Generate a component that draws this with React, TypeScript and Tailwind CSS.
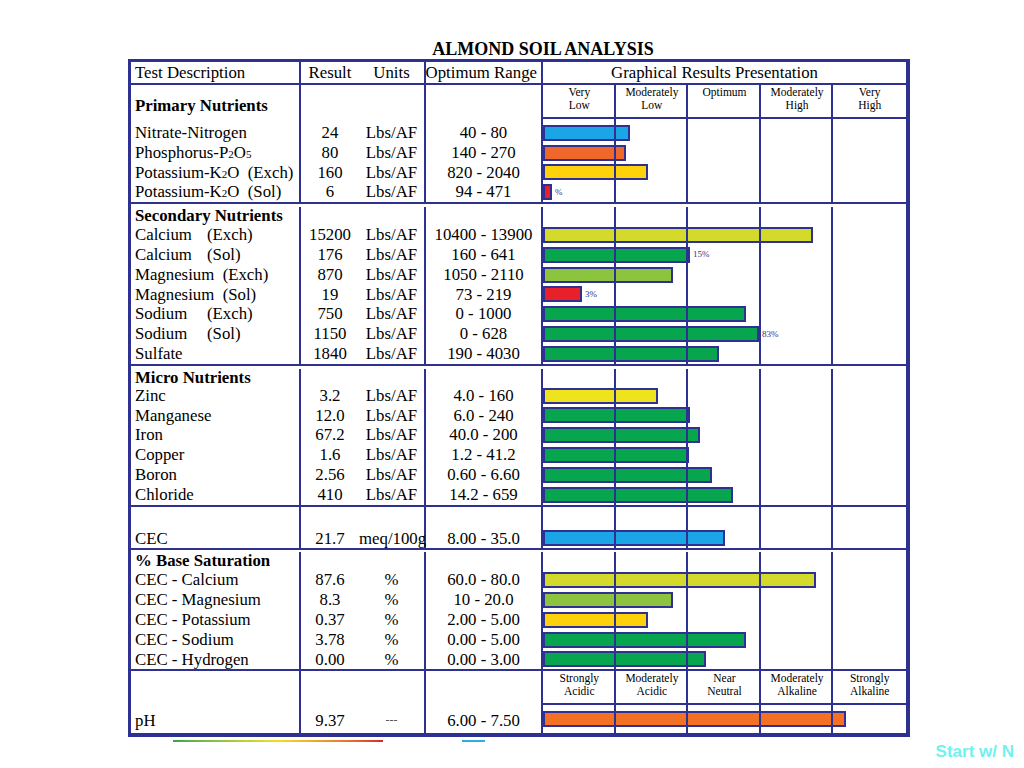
import type { ReactNode } from "react";

type Tone = "blue" | "orange" | "gold" | "red" | "lime" | "green" | "leaf" | "lemon" | "ph";

const toneClass: Record<Tone, string> = {
    blue: "bg-[#1ba4e6]",
    orange: "bg-[#f0672a]",
    gold: "bg-[#fdd20a]",
    red: "bg-[#e8202a]",
    lime: "bg-[#d3da2b]",
    green: "bg-[#08a54f]",
    leaf: "bg-[#8cc43f]",
    lemon: "bg-[#eee31c]",
    ph: "bg-[#f37024]",
};

type Test = {
    name: ReactNode;
    result: string;
    units: string;
    range: string;
    bar: number;
    tone: Tone;
    pct?: string;
};

const Sub = ({ children }: { children: ReactNode }) => (
    <span className="text-[11px]">{children}</span>
);

const Pad = ({ children }: { children: ReactNode }) => (
    <span className="inline-block w-[72px]">{children}</span>
);

const primary: Test[] = [
    { name: "Nitrate-Nitrogen", result: "24", units: "Lbs/AF", range: "40 - 80", bar: 87, tone: "blue" },
    { name: <>Phosphorus-P<Sub>2</Sub>O<Sub>5</Sub></>, result: "80", units: "Lbs/AF", range: "140 - 270", bar: 83, tone: "orange" },
    { name: <>Potassium-K<Sub>2</Sub>O  (Exch)</>, result: "160", units: "Lbs/AF", range: "820 - 2040", bar: 105, tone: "gold" },
    { name: <>Potassium-K<Sub>2</Sub>O  (Sol)</>, result: "6", units: "Lbs/AF", range: "94 - 471", bar: 9, tone: "red", pct: "%" },
];

const secondary: Test[] = [
    { name: <><Pad>Calcium</Pad>(Exch)</>, result: "15200", units: "Lbs/AF", range: "10400 - 13900", bar: 270, tone: "lime" },
    { name: <><Pad>Calcium</Pad>(Sol)</>, result: "176", units: "Lbs/AF", range: "160 - 641", bar: 147, tone: "green", pct: "15%" },
    { name: "Magnesium  (Exch)", result: "870", units: "Lbs/AF", range: "1050 - 2110", bar: 130, tone: "leaf" },
    { name: "Magnesium  (Sol)", result: "19", units: "Lbs/AF", range: "73 - 219", bar: 39, tone: "red", pct: "3%" },
    { name: <><Pad>Sodium</Pad>(Exch)</>, result: "750", units: "Lbs/AF", range: "0 - 1000", bar: 203, tone: "green" },
    { name: <><Pad>Sodium</Pad>(Sol)</>, result: "1150", units: "Lbs/AF", range: "0 - 628", bar: 216, tone: "green", pct: "83%" },
    { name: "Sulfate", result: "1840", units: "Lbs/AF", range: "190 - 4030", bar: 176, tone: "green" },
];

const micro: Test[] = [
    { name: "Zinc", result: "3.2", units: "Lbs/AF", range: "4.0 - 160", bar: 115, tone: "lemon" },
    { name: "Manganese", result: "12.0", units: "Lbs/AF", range: "6.0 - 240", bar: 147, tone: "green" },
    { name: "Iron", result: "67.2", units: "Lbs/AF", range: "40.0 - 200", bar: 157, tone: "green" },
    { name: "Copper", result: "1.6", units: "Lbs/AF", range: "1.2 - 41.2", bar: 146, tone: "green" },
    { name: "Boron", result: "2.56", units: "Lbs/AF", range: "0.60 - 6.60", bar: 169, tone: "green" },
    { name: "Chloride", result: "410", units: "Lbs/AF", range: "14.2 - 659", bar: 190, tone: "green" },
];

const cec: Test = { name: "CEC", result: "21.7", units: "meq/100g", range: "8.00 - 35.0", bar: 182, tone: "blue" };

const base: Test[] = [
    { name: "CEC - Calcium", result: "87.6", units: "%", range: "60.0 - 80.0", bar: 273, tone: "lime" },
    { name: "CEC - Magnesium", result: "8.3", units: "%", range: "10 - 20.0", bar: 130, tone: "leaf" },
    { name: "CEC - Potassium", result: "0.37", units: "%", range: "2.00 - 5.00", bar: 105, tone: "gold" },
    { name: "CEC - Sodium", result: "3.78", units: "%", range: "0.00 - 5.00", bar: 203, tone: "green" },
    { name: "CEC - Hydrogen", result: "0.00", units: "%", range: "0.00 - 3.00", bar: 163, tone: "green" },
];

const levels = [
    ["Very", "Low"],
    ["Moderately", "Low"],
    ["Optimum", ""],
    ["Moderately", "High"],
    ["Very", "High"],
];

const phLevels = [
    ["Strongly", "Acidic"],
    ["Moderately", "Acidic"],
    ["Near", "Neutral"],
    ["Moderately", "Alkaline"],
    ["Strongly", "Alkaline"],
];

function GraphLines() {
    return (
        <div className="pointer-events-none absolute inset-0 grid grid-cols-5">
            <div className="border-r-2 border-[#2e3192]" />
            <div className="border-r-2 border-[#2e3192]" />
            <div className="border-r-2 border-[#2e3192]" />
            <div className="border-r-2 border-[#2e3192]" />
            <div />
        </div>
    );
}

function Bar({ width, tone, pct }: { width: number; tone: Tone; pct?: string }) {
    return (
        <div className="flex items-center">
            <div
                className={`h-[16px] border-2 border-[#2e3192] ${toneClass[tone]}`}
                style={{ width }}
            />
            {pct && (
                <span className="ml-[3px] text-[9px] leading-none text-[#2e3192]">{pct}</span>
            )}
        </div>
    );
}

function Levels({ items }: { items: string[][] }) {
    return (
        <div className="grid h-[34px] grid-cols-5 border-b-2 border-[#2e3192] text-center text-[11.5px] leading-[13px]">
            {items.map(([a, b]) => (
                <div key={a + b} className="pt-[1px]">
                    <div>{a}</div>
                    <div>{b}</div>
                </div>
            ))}
        </div>
    );
}

function TestRow({ t }: { t: Test }) {
    return (
        <div className="flex h-[19.8px] leading-[19.8px]">
            <div className="w-[170px] shrink-0 whitespace-pre border-r-2 border-[#2e3192] pl-[4px]">
                {t.name}
            </div>
            <div className="flex w-[125px] shrink-0 border-r-2 border-[#2e3192]">
                <span className="w-[58px] text-center">{t.result}</span>
                <span className="w-[65px] whitespace-nowrap text-center">{t.units}</span>
            </div>
            <div className="w-[117px] shrink-0 whitespace-nowrap border-r-2 border-[#2e3192] text-center">
                {t.range}
            </div>
            <div className="relative flex flex-1 items-center">
                <Bar width={t.bar} tone={t.tone} pct={t.pct} />
                <GraphLines />
            </div>
        </div>
    );
}

function HeadRow({ label, size }: { label?: string; size: string }) {
    return (
        <div className={`flex ${size}`}>
            <div className="w-[170px] shrink-0 whitespace-nowrap border-r-2 border-[#2e3192] pl-[4px] font-bold leading-[18px]">
                {label}
            </div>
            <div className="w-[125px] shrink-0 border-r-2 border-[#2e3192]" />
            <div className="w-[117px] shrink-0 border-r-2 border-[#2e3192]" />
            <div className="relative flex-1">
                <GraphLines />
            </div>
        </div>
    );
}

export default function App() {
    return (
        <div className="h-[768px] w-[1024px] overflow-hidden bg-white font-['Liberation_Serif',serif] text-[16.8px] text-black">
            <div className="pl-[62px] pt-[39px] text-center text-[18px] font-bold leading-[20px]">
                ALMOND SOIL ANALYSIS
            </div>

            <div className="ml-[128px] w-[782px] border-b-4 border-l-[3px] border-r-4 border-t-[3px] border-[#2e3192]">
                {/* column headings */}
                <div className="flex h-[23px] border-b-2 border-[#2e3192] leading-[21px]">
                    <div className="w-[170px] shrink-0 border-r-2 border-[#2e3192] pl-[4px]">Test Description</div>
                    <div className="flex w-[125px] shrink-0 border-r-2 border-[#2e3192]">
                        <span className="w-[58px] text-center">Result</span>
                        <span className="w-[65px] text-center">Units</span>
                    </div>
                    <div className="flex w-[117px] shrink-0 justify-end overflow-hidden whitespace-nowrap border-r-2 border-[#2e3192] pr-[4px]">
                        Optimum Range
                    </div>
                    <div className="flex-1 pr-[20px] text-center">Graphical Results Presentation</div>
                </div>

                {/* primary */}
                <div className="border-b-2 border-[#2e3192]">
                    <div className="flex h-[38px]">
                        <div className="w-[170px] shrink-0 whitespace-nowrap border-r-2 border-[#2e3192] pl-[4px] pt-[12px] font-bold leading-[18px]">
                            Primary Nutrients
                        </div>
                        <div className="w-[125px] shrink-0 border-r-2 border-[#2e3192]" />
                        <div className="w-[117px] shrink-0 border-r-2 border-[#2e3192]" />
                        <div className="relative flex-1">
                            <Levels items={levels} />
                            <GraphLines />
                        </div>
                    </div>
                    {primary.map((t, i) => (
                        <TestRow key={i} t={t} />
                    ))}
                </div>

                {/* secondary */}
                <div className="border-b-2 border-[#2e3192]">
                    <HeadRow label="Secondary Nutrients" size="h-[21px] pt-[3px]" />
                    {secondary.map((t, i) => (
                        <TestRow key={i} t={t} />
                    ))}
                </div>

                {/* micro */}
                <div className="border-b-2 border-[#2e3192]">
                    <HeadRow label="Micro Nutrients" size="h-[20px] pt-[3px]" />
                    {micro.map((t, i) => (
                        <TestRow key={i} t={t} />
                    ))}
                </div>

                {/* cec */}
                <div className="border-b-2 border-[#2e3192]">
                    <HeadRow size="h-[22px]" />
                    <TestRow t={cec} />
                </div>

                {/* base saturation */}
                <div className="border-b-2 border-[#2e3192]">
                    <HeadRow label="% Base Saturation" size="h-[20px] pt-[2px]" />
                    {base.map((t, i) => (
                        <TestRow key={i} t={t} />
                    ))}
                </div>

                {/* pH */}
                <div className="flex h-[62px] leading-[19.8px]">
                    <div className="flex w-[170px] shrink-0 items-end border-r-2 border-[#2e3192] pb-[3px] pl-[4px]">pH</div>
                    <div className="flex w-[125px] shrink-0 items-end border-r-2 border-[#2e3192] pb-[3px]">
                        <span className="w-[58px] text-center">9.37</span>
                        <span className="w-[65px] text-center text-[12px] text-[#555]">---</span>
                    </div>
                    <div className="flex w-[117px] shrink-0 items-end justify-center border-r-2 border-[#2e3192] pb-[3px]">
                        6.00 - 7.50
                    </div>
                    <div className="relative flex flex-1 flex-col">
                        <Levels items={phLevels} />
                        <div className="flex flex-1 items-center">
                            <Bar width={303} tone="ph" />
                        </div>
                        <GraphLines />
                    </div>
                </div>
            </div>

            <div className="mt-[3px] flex">
                <div className="ml-[173px] h-[2px] w-[210px] bg-linear-to-r from-[#2ea84a] via-[#f0e020] to-[#d8262c]" />
                <div className="ml-[79px] h-[2px] w-[23px] bg-[#2ab0e0]" />
            </div>
            <div className="mt-[1px] pr-[10px] text-right font-['Liberation_Sans',sans-serif] text-[17px] font-bold leading-[18px] text-[#72f1ee]">
                Start w/ N
            </div>
        </div>
    );
}
